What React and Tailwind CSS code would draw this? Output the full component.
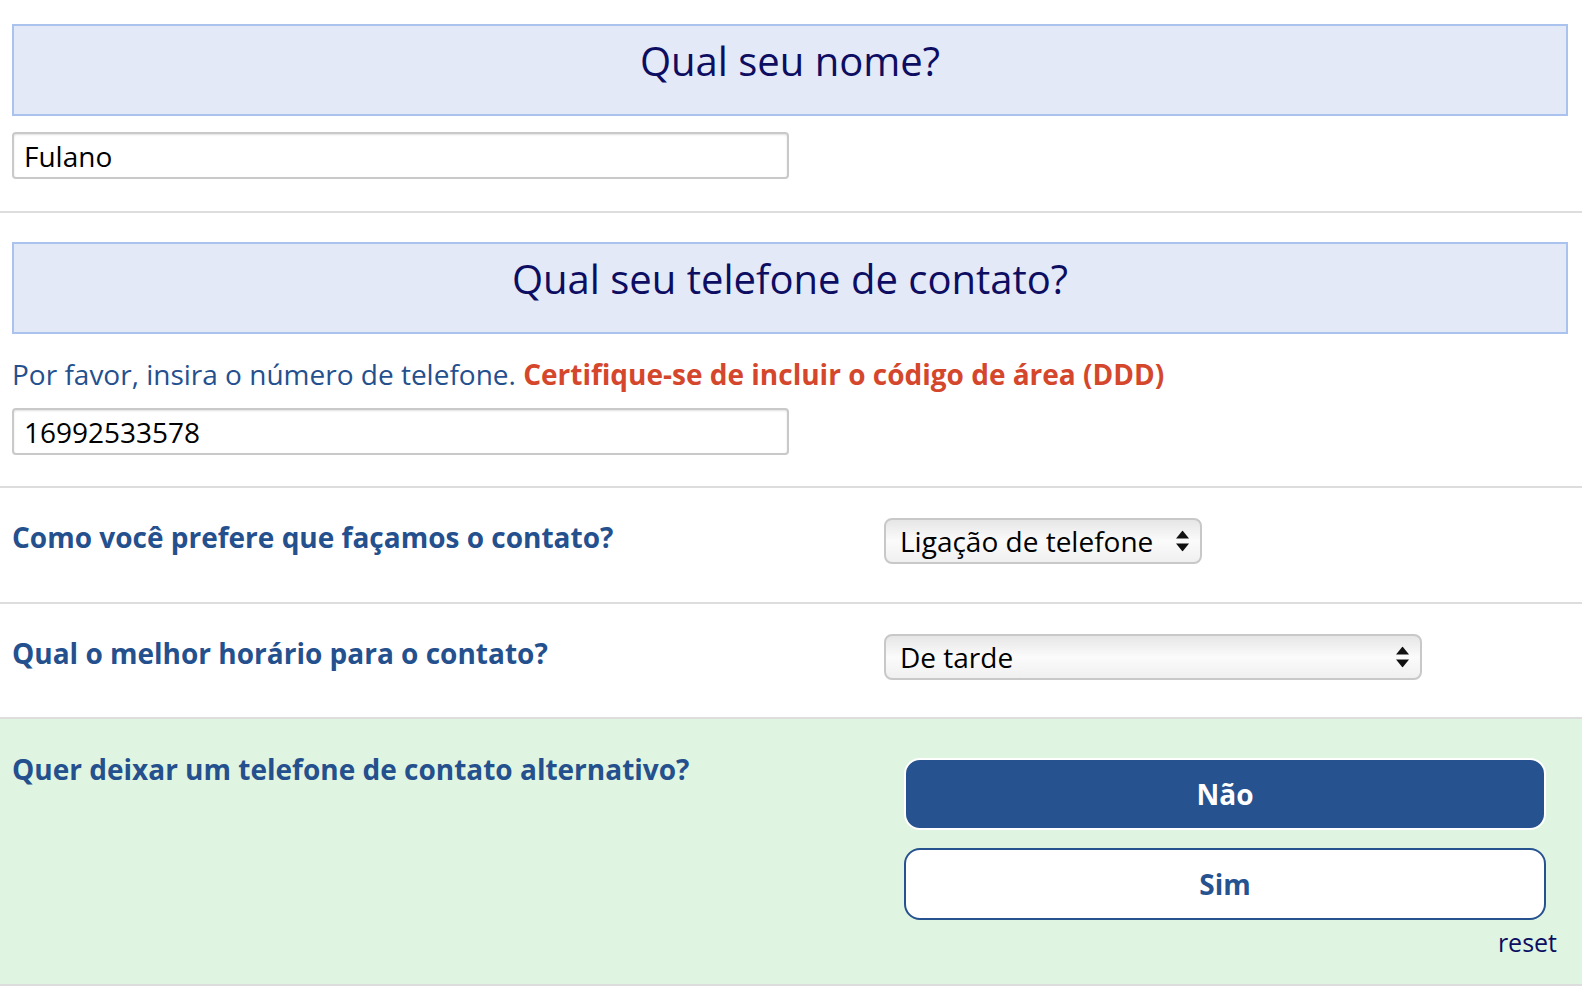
import { useState } from 'react'

const font = { fontFamily: '"Open Sans", "Noto Sans", sans-serif' }

function SectionHeader({ children }) {
  return (
    <div className="h-[92px] border-2 border-[#aac2ee] bg-[#e3e9f7] pt-[7px] text-center text-[40px] leading-[56px] text-[#0d0d62]">
      {children}
    </div>
  )
}

function TextInput({ value, className = 'mt-[16px]' }) {
  return (
    <input
      className={`block h-[47px] w-[777px] rounded-[4px] border-2 border-[#c9c9c9] bg-white px-[10px] text-[28px] text-black shadow-[inset_0_1px_2px_rgba(0,0,0,0.12)] outline-none ${className}`}
      defaultValue={value}
      style={font}
      type="text"
    />
  )
}

function Arrows() {
  return (
    <svg className="pointer-events-none absolute right-[13px] top-1/2 -translate-y-1/2" width="13" height="21" viewBox="0 0 13 21">
      <path d="M6.5 0 L13 8 L0 8 Z" fill="#111" />
      <path d="M0 13 L13 13 L6.5 21 Z" fill="#111" />
    </svg>
  )
}

function Select({ value, options, className }) {
  return (
    <div className={`relative h-[46px] ${className}`}>
      <select
        className="h-full w-full appearance-none rounded-[8px] border-2 border-[#c8c8c8] bg-gradient-to-b from-[#e6e6e6] via-[#fbfbfb] to-[#f0f0f0] pl-[14px] pr-[34px] text-[28px] text-black outline-none"
        defaultValue={value}
        style={font}
      >
        {options.map((option) => (
          <option key={option}>{option}</option>
        ))}
      </select>
      <Arrows />
    </div>
  )
}

function QuestionRow({ label, children, className = '' }) {
  return (
    <div className={`flex items-start border-b-2 border-[#dddddd] pl-[12px] pr-[14px] ${className}`}>
      <p className="w-[872px] shrink-0 text-[28px] font-bold leading-[38px] text-[#25508e]">{label}</p>
      <div className="flex-1">{children}</div>
    </div>
  )
}

export default function App() {
  const [alt, setAlt] = useState('nao')

  return (
    <div className="min-h-screen bg-white" style={font}>
      <section className="border-b-2 border-[#dddddd] pb-[32px] pl-[12px] pr-[14px] pt-[24px]">
        <SectionHeader>Qual seu nome?</SectionHeader>
        <TextInput value="Fulano" />
      </section>

      <section className="border-b-2 border-[#dddddd] pb-[31px] pl-[12px] pr-[14px] pt-[29px]">
        <SectionHeader>Qual seu telefone de contato?</SectionHeader>
        <p className="mt-[21px] text-[28px] leading-[38px] text-[#25508e]">
          Por favor, insira o número de telefone.{' '}
          <span className="font-bold text-[#d5472c]">Certifique-se de incluir o código de área (DDD)</span>
        </p>
        <TextInput className="mt-[15px]" value="16992533578" />
      </section>

      <QuestionRow className="pb-[38px] pt-[30px]" label="Como você prefere que façamos o contato?">
        <Select className="w-[318px]" options={['Ligação de telefone', 'WhatsApp', 'E-mail']} value="Ligação de telefone" />
      </QuestionRow>

      <QuestionRow className="pb-[37px] pt-[30px]" label="Qual o melhor horário para o contato?">
        <Select className="w-[538px]" options={['De manhã', 'De tarde', 'De noite']} value="De tarde" />
      </QuestionRow>

      <QuestionRow className="bg-[#dff5e1] pb-[27px] pt-[31px]" label="Quer deixar um telefone de contato alternativo?">
        <div className="ml-[20px] mr-[22px] mt-[8px] flex flex-col gap-[18px]">
          <button
            className={`h-[72px] rounded-[16px] border-2 text-[28px] font-bold ${
              alt === 'nao' ? 'border-white bg-[#26528f] text-white' : 'border-[#26528f] bg-white text-[#26528f]'
            }`}
            onClick={() => setAlt('nao')}
            type="button"
          >
            Não
          </button>
          <button
            className={`h-[72px] rounded-[16px] border-2 text-[28px] font-bold ${
              alt === 'sim' ? 'border-white bg-[#26528f] text-white' : 'border-[#26528f] bg-white text-[#26528f]'
            }`}
            onClick={() => setAlt('sim')}
            type="button"
          >
            Sim
          </button>
        </div>
        <p className="mt-[7px] pr-[11px] text-right text-[25px] leading-[30px] text-[#0d0d62]">reset</p>
      </QuestionRow>
    </div>
  )
}
